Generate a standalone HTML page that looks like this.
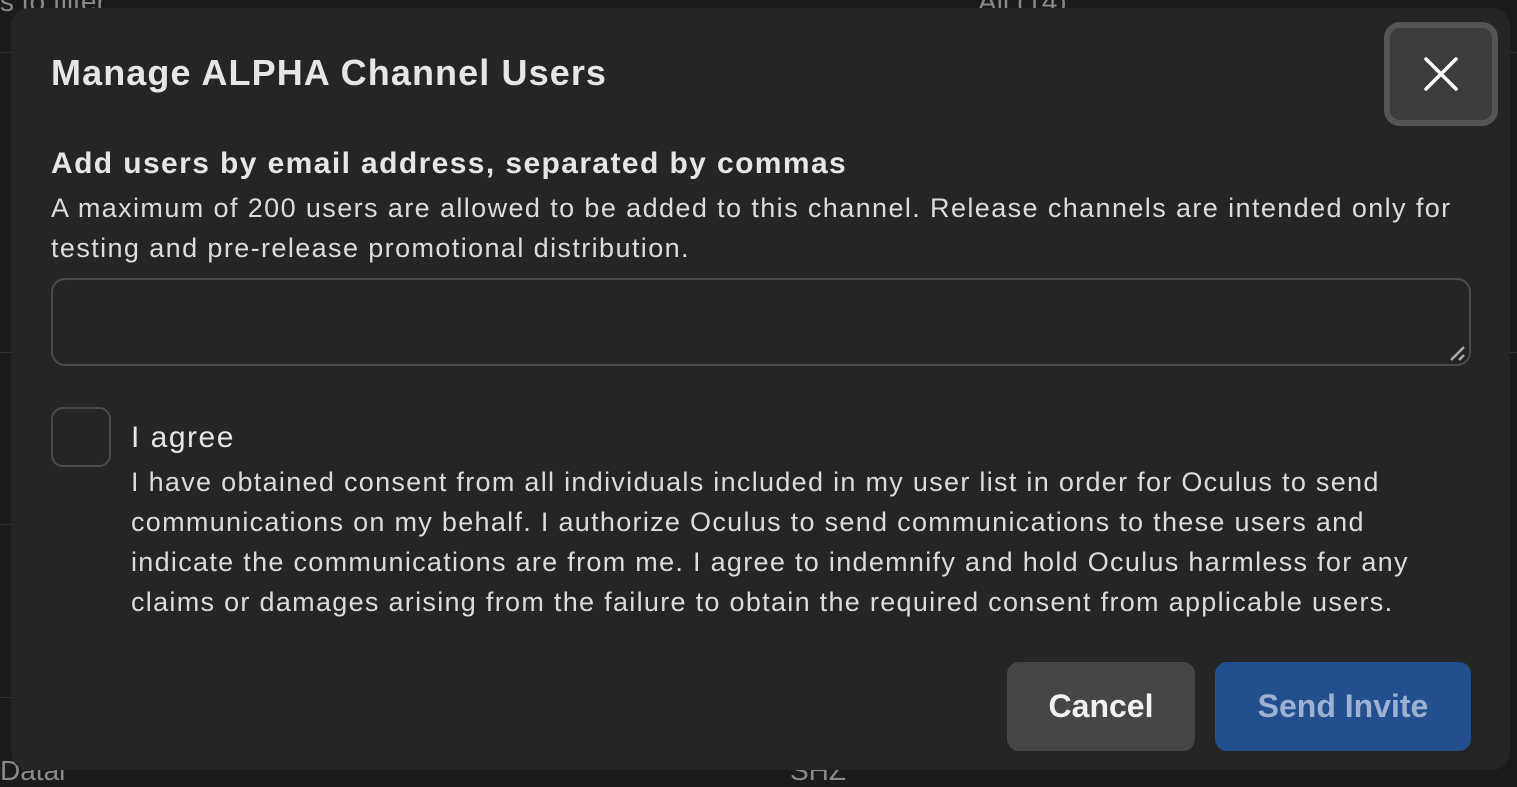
<!DOCTYPE html>
<html><head><meta charset="utf-8"><style>
*{box-sizing:border-box;margin:0;padding:0}
body{width:1517px;height:775px;background:#1b1b1b;font-family:"Liberation Sans",sans-serif;color:#e4e4e4;position:relative;overflow:hidden}
.bg{position:absolute;color:#8a8a8a;font-size:28px}
.line{position:absolute;height:1px;background:#333}
.modal{position:absolute;left:11px;top:8px;width:1499px;height:762px;background:#252525;border-radius:18px}
h1{position:absolute;left:40px;top:44px;font-size:36px;font-weight:bold;color:#e6e6e6;letter-spacing:1.1px}
.close{position:absolute;left:1373px;top:14px;width:114px;height:104px;border:6px solid #555;border-radius:16px;background:#3c3c3c}
.close svg{position:absolute;left:32px;top:27px}
h2{position:absolute;left:40px;top:139px;font-size:30px;font-weight:bold;color:#e6e6e6;letter-spacing:1.4px}
.desc{position:absolute;left:40px;top:180px;font-size:27px;line-height:40px;color:#dcdcdc;width:1440px;letter-spacing:1.4px}
.ta{position:absolute;left:40px;top:270px;width:1420px;height:88px;border:2px solid #4a4a4a;border-radius:14px}
.ta svg{position:absolute;right:2px;bottom:2px}
.cb{position:absolute;left:40px;top:399px;width:60px;height:60px;border:2px solid #4a4a4a;border-radius:12px}
.agree{position:absolute;left:120px;top:413px;font-size:30px;color:#e6e6e6;letter-spacing:1.5px}
.cons{position:absolute;left:120px;top:454px;font-size:27px;line-height:40px;color:#dcdcdc;width:1320px;letter-spacing:1.3px}
.btn{position:absolute;top:654px;height:89px;border-radius:12px;font-size:32px;font-weight:bold;display:flex;align-items:center;justify-content:center}
.cancel{left:996px;width:188px;background:#464646;color:#f2f2f2}
.send{left:1204px;width:256px;background:#234f8e;color:#9db1d4}
</style></head><body>
<div class="bg" style="left:0;top:-14px">s to filter</div>
<div class="bg" style="left:978px;top:-14px">All (14)</div>
<div class="bg" style="left:790px;top:755px">SHZ</div>
<div class="bg" style="left:0;top:755px">Datal</div>
<div class="line" style="left:0;top:52px;width:12px"></div>
<div class="line" style="left:0;top:352px;width:12px"></div>
<div class="line" style="left:0;top:524px;width:12px"></div>
<div class="line" style="left:0;top:697px;width:12px"></div>
<div class="line" style="left:1510px;top:52px;width:7px"></div>
<div class="line" style="left:1510px;top:352px;width:7px"></div>
<div class="modal">
<h1>Manage ALPHA Channel Users</h1>
<div class="close"><svg width="38" height="38" viewBox="0 0 38 38"><path d="M4 4L34 34M34 4L4 34" stroke="#fff" stroke-width="3.5" stroke-linecap="round"/></svg></div>
<h2>Add users by email address, separated by commas</h2>
<div class="desc">A maximum of 200 users are allowed to be added to this channel. Release channels are intended only for<br>testing and pre-release promotional distribution.</div>
<div class="ta"><svg width="20" height="20" viewBox="0 0 20 20"><path d="M4 18L17 5M12 18L17 13" stroke="#aaa" stroke-width="2.5"/></svg></div>
<div class="cb"></div>
<div class="agree">I agree</div>
<div class="cons">I have obtained consent from all individuals included in my user list in order for Oculus to send<br>communications on my behalf. I authorize Oculus to send communications to these users and<br>indicate the communications are from me. I agree to indemnify and hold Oculus harmless for any<br>claims or damages arising from the failure to obtain the required consent from applicable users.</div>
<div class="btn cancel">Cancel</div>
<div class="btn send">Send Invite</div>
</div>
</body></html>
